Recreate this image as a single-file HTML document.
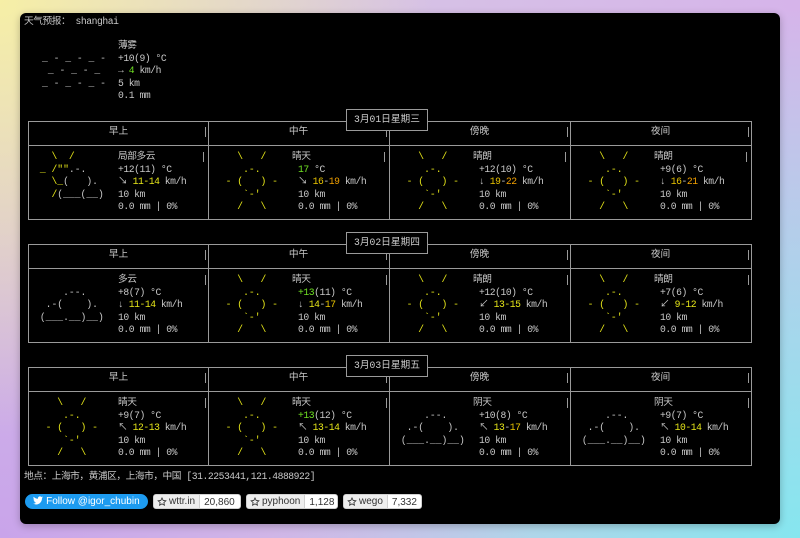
<!DOCTYPE html>
<html><head><meta charset="utf-8"><style>
html,body{margin:0;padding:0}
body{width:800px;height:538px;position:relative;overflow:hidden;
background:
radial-gradient(circle at 0% 0%, #f6efa6 0%, rgba(246,239,166,0) 45%),
radial-gradient(circle at 0% 100%, #c9a4ea 0%, rgba(201,164,234,0) 55%),
radial-gradient(circle at 100% 100%, #86e6ef 0%, rgba(134,230,239,0) 55%),
radial-gradient(circle at 100% 0%, #d6b4ea 0%, rgba(214,180,234,0) 55%),
#d6c6e4;
font-family:"Liberation Mono","Noto Sans CJK SC",monospace;font-size:9.7px;color:#c8c8c8}
.panel{position:absolute;left:20px;top:13px;width:760px;height:511px;background:#000;border-radius:6px;box-shadow:0 2px 8px rgba(0,0,0,.25)}
.a{position:absolute;white-space:pre;line-height:12.5px}
.t{letter-spacing:-0.45px}
.day{position:absolute;left:0;width:800px;height:130px}
.h{position:absolute;height:1px;background:#9a9a9a;left:28px;width:724px}
.v{position:absolute;width:1px;background:#9a9a9a;top:121px;height:99px}
.sb{position:absolute;width:1px;background:#9a9a9a;height:10px}
.date{position:absolute;left:346px;top:109px;width:82px;height:22px;background:#000;border:1px solid #9a9a9a;box-sizing:border-box;text-align:center;line-height:20px;color:#ccc}
.hd{position:absolute;top:126px;width:181px;text-align:center;line-height:12px}
.y{color:#e6e619}.g{color:#6fe022}.o{color:#f2a000}.oy{color:#e9c400}
.sh{position:relative;left:-6px}
.btn{position:absolute;top:494px;height:15px;font-family:"Liberation Sans",sans-serif;font-size:10px;line-height:15px}
.gh{border:1px solid #d0d0d0;border-radius:3px;background:#fff;color:#333;box-sizing:border-box;display:flex;overflow:hidden}
.gh .l{background:#eee;padding:0 4px 0 3px;border-right:1px solid #d0d0d0;display:flex;align-items:center;gap:2px}
.gh .r{padding:0 4px}
</style></head><body>
<div class="panel"></div>
<div class="a t" style="left:24px;top:16px">天气预报： shanghai</div>
<div class="a" style="left:42px;top:40px;color:#c4c4c4">
_ - _ - _ -
 _ - _ - _
_ - _ - _ -</div>
<div class="a t" style="left:118px;top:40px">薄雾
+10(9) °C
→ <span class="g">4</span> km/h
5 km
0.1 mm</div>

<!-- DAY 1 -->
<div class="day" style="top:0">
<div class="h" style="top:121px"></div><div class="h" style="top:145px"></div><div class="h" style="top:219px"></div>
<div class="v" style="left:28px"></div><div class="v" style="left:208px"></div><div class="v" style="left:389px"></div><div class="v" style="left:570px"></div><div class="v" style="left:751px"></div>
<div class="sb" style="left:205px;top:127px"></div><div class="sb" style="left:386px;top:127px"></div><div class="sb" style="left:567px;top:127px"></div><div class="sb" style="left:748px;top:127px"></div>
<div class="sb" style="left:203px;top:152px"></div><div class="sb" style="left:384px;top:152px"></div><div class="sb" style="left:565px;top:152px"></div><div class="sb" style="left:746px;top:152px"></div>
<div class="date">3月01日星期三</div>
<div class="hd" style="left:28px">早上</div><div class="hd" style="left:208px">中午</div><div class="hd" style="left:389px">傍晚</div><div class="hd" style="left:570px">夜间</div>
<div class="a" style="left:34px;top:151px"><span class="y">   \  /</span>
<span class="y"> _ /""</span>.-.
<span class="y">   \_</span>(   ).
<span class="y">   /</span>(___(__)</div>
<div class="a t" style="left:118px;top:151px">局部多云
+12(11) °C
↘ <span class="y">11-14</span> km/h
10 km
0.0 mm | 0%</div>
<div class="a y" style="left:214px;top:151px">    \   /
     .-.
  - (   ) -
     `-'
    /   \</div>
<div class="a t" style="left:298px;top:151px"><span class="sh">晴天</span>
<span class="g">17</span> °C
↘ <span class="oy">16</span>-<span class="o">19</span> km/h
10 km
0.0 mm | 0%</div>
<div class="a y" style="left:395px;top:151px">    \   /
     .-.
  - (   ) -
     `-'
    /   \</div>
<div class="a t" style="left:479px;top:151px"><span class="sh">晴朗</span>
+12(10) °C
↓ <span class="oy">19</span>-<span class="o">22</span> km/h
10 km
0.0 mm | 0%</div>
<div class="a y" style="left:576px;top:151px">    \   /
     .-.
  - (   ) -
     `-'
    /   \</div>
<div class="a t" style="left:660px;top:151px"><span class="sh">晴朗</span>
+9(6) °C
↓ <span class="oy">16</span>-<span class="o">21</span> km/h
10 km
0.0 mm | 0%</div>
</div>

<!-- DAY 2 -->
<div class="day" style="top:123px">
<div class="h" style="top:121px"></div><div class="h" style="top:145px"></div><div class="h" style="top:219px"></div>
<div class="v" style="left:28px"></div><div class="v" style="left:208px"></div><div class="v" style="left:389px"></div><div class="v" style="left:570px"></div><div class="v" style="left:751px"></div>
<div class="sb" style="left:205px;top:127px"></div><div class="sb" style="left:386px;top:127px"></div><div class="sb" style="left:567px;top:127px"></div><div class="sb" style="left:748px;top:127px"></div>
<div class="sb" style="left:205px;top:152px"></div><div class="sb" style="left:386px;top:152px"></div><div class="sb" style="left:567px;top:152px"></div><div class="sb" style="left:748px;top:152px"></div>
<div class="date">3月02日星期四</div>
<div class="hd" style="left:28px">早上</div><div class="hd" style="left:208px">中午</div><div class="hd" style="left:389px">傍晚</div><div class="hd" style="left:570px">夜间</div>
<div class="a" style="left:34px;top:151px">
     .--.
  .-(    ).
 (___.__)__)</div>
<div class="a t" style="left:118px;top:151px">多云
+8(7) °C
↓ <span class="y">11-14</span> km/h
10 km
0.0 mm | 0%</div>
<div class="a y" style="left:214px;top:151px">    \   /
     .-.
  - (   ) -
     `-'
    /   \</div>
<div class="a t" style="left:298px;top:151px"><span class="sh">晴天</span>
<span class="g">+13</span>(11) °C
↓ <span class="y">14</span>-<span class="oy">17</span> km/h
10 km
0.0 mm | 0%</div>
<div class="a y" style="left:395px;top:151px">    \   /
     .-.
  - (   ) -
     `-'
    /   \</div>
<div class="a t" style="left:479px;top:151px"><span class="sh">晴朗</span>
+12(10) °C
↙ <span class="y">13-15</span> km/h
10 km
0.0 mm | 0%</div>
<div class="a y" style="left:576px;top:151px">    \   /
     .-.
  - (   ) -
     `-'
    /   \</div>
<div class="a t" style="left:660px;top:151px"><span class="sh">晴朗</span>
+7(6) °C
↙ <span class="y">9-12</span> km/h
10 km
0.0 mm | 0%</div>
</div>

<!-- DAY 3 -->
<div class="day" style="top:246px">
<div class="h" style="top:121px"></div><div class="h" style="top:145px"></div><div class="h" style="top:219px"></div>
<div class="v" style="left:28px"></div><div class="v" style="left:208px"></div><div class="v" style="left:389px"></div><div class="v" style="left:570px"></div><div class="v" style="left:751px"></div>
<div class="sb" style="left:205px;top:127px"></div><div class="sb" style="left:386px;top:127px"></div><div class="sb" style="left:567px;top:127px"></div><div class="sb" style="left:748px;top:127px"></div>
<div class="sb" style="left:205px;top:152px"></div><div class="sb" style="left:386px;top:152px"></div><div class="sb" style="left:567px;top:152px"></div><div class="sb" style="left:748px;top:152px"></div>
<div class="date">3月03日星期五</div>
<div class="hd" style="left:28px">早上</div><div class="hd" style="left:208px">中午</div><div class="hd" style="left:389px">傍晚</div><div class="hd" style="left:570px">夜间</div>
<div class="a y" style="left:34px;top:151px">    \   /
     .-.
  - (   ) -
     `-'
    /   \</div>
<div class="a t" style="left:118px;top:151px">晴天
+9(7) °C
↖ <span class="y">12-13</span> km/h
10 km
0.0 mm | 0%</div>
<div class="a y" style="left:214px;top:151px">    \   /
     .-.
  - (   ) -
     `-'
    /   \</div>
<div class="a t" style="left:298px;top:151px"><span class="sh">晴天</span>
<span class="g">+13</span>(12) °C
↖ <span class="y">13-14</span> km/h
10 km
0.0 mm | 0%</div>
<div class="a" style="left:395px;top:151px">
     .--.
  .-(    ).
 (___.__)__)</div>
<div class="a t" style="left:479px;top:151px"><span class="sh">阴天</span>
+10(8) °C
↖ <span class="y">13</span>-<span class="oy">17</span> km/h
10 km
0.0 mm | 0%</div>
<div class="a" style="left:576px;top:151px">
     .--.
  .-(    ).
 (___.__)__)</div>
<div class="a t" style="left:660px;top:151px"><span class="sh">阴天</span>
+9(7) °C
↖ <span class="y">10-14</span> km/h
10 km
0.0 mm | 0%</div>
</div>

<div class="a t" style="left:24px;top:471px">地点：上海市，黄浦区，上海市，中国 [31.2253441,121.4888922]</div>

<div class="btn" style="left:25px;width:123px;background:#1d9bf0;border-radius:8px;color:#fff;text-align:center">
<svg width="10" height="9" viewBox="0 0 24 20" style="vertical-align:-1px"><path fill="#fff" d="M24 2.4c-.9.4-1.8.7-2.8.8 1-.6 1.8-1.6 2.2-2.7-1 .6-2 1-3.1 1.2C19.3.7 18 0 16.6 0c-2.7 0-4.9 2.2-4.9 4.9 0 .4 0 .8.1 1.1C7.700 5.8 4.1 3.9 1.7.9c-.4.7-.7 1.6-.7 2.5 0 1.7.9 3.2 2.2 4.1-.8 0-1.6-.2-2.2-.6v.1c0 2.4 1.7 4.4 3.9 4.8-.4.1-.8.2-1.3.2-.3 0-.6 0-.9-.1.6 2 2.4 3.4 4.6 3.4-1.7 1.300-3.8 2.1-6.1 2.1-.4 0-.8 0-1.2-.1 2.2 1.4 4.8 2.2 7.5 2.2 9.1 0 14-7.5 14-14v-.6c1-.7 1.8-1.6 2.5-2.5z"/></svg> Follow @igor_chubin</div>
<div class="btn gh" style="left:153px;width:88px"><span class="l"><svg width="10" height="10" viewBox="0 0 16 16"><path d="M8 1.5l1.9 4 4.3.5-3.2 2.9.9 4.3L8 11l-3.9 2.2.9-4.3L1.8 6l4.3-.5z" fill="none" stroke="#333" stroke-width="1.3"/></svg>wttr.in</span><span class="r">20,860</span></div>
<div class="btn gh" style="left:246px;width:92px"><span class="l"><svg width="10" height="10" viewBox="0 0 16 16"><path d="M8 1.5l1.9 4 4.3.5-3.2 2.9.9 4.3L8 11l-3.9 2.2.9-4.3L1.8 6l4.3-.5z" fill="none" stroke="#333" stroke-width="1.3"/></svg>pyphoon</span><span class="r">1,128</span></div>
<div class="btn gh" style="left:343px;width:79px"><span class="l"><svg width="10" height="10" viewBox="0 0 16 16"><path d="M8 1.5l1.9 4 4.3.5-3.2 2.9.9 4.3L8 11l-3.9 2.2.9-4.3L1.8 6l4.3-.5z" fill="none" stroke="#333" stroke-width="1.3"/></svg>wego</span><span class="r">7,332</span></div>
</body></html>
